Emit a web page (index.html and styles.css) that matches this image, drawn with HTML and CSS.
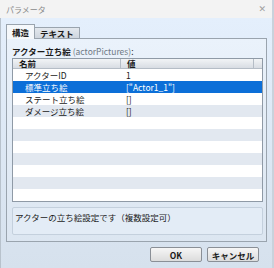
FILE: index.html
```html
<!DOCTYPE html>
<html lang="ja">
<head>
<meta charset="utf-8">
<link rel="stylesheet" href="styles.css">
</head>
<body>
<div class="window">
  <div class="titlebar">
    <span class="title">パラメータ</span>
    <span class="close">✕</span>
  </div>
  <div class="client">
    <div class="tabs">
      <div class="tab active">構造</div>
      <div class="tab">テキスト</div>
    </div>
    <div class="panel">
      <div class="label"><b>アクター立ち絵</b> <span class="param">(actorPictures)</span>:</div>
      <div class="table">
        <div class="thead">
          <div class="th name">名前</div>
          <div class="th value">値</div>
          <div class="th filler"></div>
        </div>
        <div class="tbody">
          <div class="row"><div class="cell name">アクターID</div><div class="cell value">1</div></div>
          <div class="row sel"><div class="cell name">標準立ち絵</div><div class="cell value">["Actor1_1"]</div></div>
          <div class="row"><div class="cell name">ステート立ち絵</div><div class="cell value">[]</div></div>
          <div class="row alt"><div class="cell name">ダメージ立ち絵</div><div class="cell value">[]</div></div>
          <div class="row"></div>
          <div class="row alt"></div>
          <div class="row"></div>
          <div class="row alt"></div>
          <div class="row"></div>
          <div class="row alt"></div>
          <div class="row"></div>
        </div>
      </div>
      <div class="desc">アクターの立ち絵設定です（複数設定可）</div>
    </div>
    <div class="buttons">
      <button class="btn">OK</button>
      <button class="btn">キャンセル</button>
    </div>
  </div>
</div>
</body>
</html>
```
FILE: styles.css
```css
* { box-sizing: border-box; }
html, body { margin: 0; padding: 0; }
body {
  width: 274px;
  height: 268px;
  overflow: hidden;
  font-family: "Noto Sans CJK JP", "Noto Sans", sans-serif;
  font-size: 8.5px;
  color: #1a1a1a;
  background: #f0f0f0;
}
.window {
  width: 274px;
  height: 268px;
  display: flex;
  flex-direction: column;
  border-right: 2px solid #c9d2dc;
}
.titlebar {
  height: 18px;
  flex: none;
  display: flex;
  align-items: center;
  justify-content: space-between;
  padding: 0 6px 0 6px;
  background: #f3f3f3;
}
.title {
  color: #8a8a8a;
  font-size: 8px;
}
.close {
  color: #a0a0a0;
  font-size: 9px;
  font-family: "DejaVu Sans", sans-serif;
}
.client {
  flex: 1;
  display: flex;
  flex-direction: column;
  background: linear-gradient(#e4effc, #d6e1ed);
  padding: 6px 5px 0 5px;
  border-left: 1px solid #b8c2cc;
}
.tabs {
  display: flex;
  align-items: flex-end;
  height: 14px;
}
.tab {
  height: 11px;
  padding: 0 5px;
  font-weight: bold;
  font-size: 8.5px;
  line-height: 11px;
  background: linear-gradient(#e3e8ee, #cfd6de);
  border: 1px solid #9aa4ae;
  border-bottom: none;
  margin-left: -1px;
}
.tab.active {
  height: 15px;
  line-height: 14px;
  background: #f5f8fb;
  margin-left: 0;
  position: relative;
  z-index: 1;
  margin-bottom: -1px;
}
.panel {
  height: 204px;
  flex: none;
  border: 1px solid #9aa4ae;
  background: linear-gradient(#eaf2fb, #dce6f1);
  padding: 6px 3px 6px 5px;
  display: flex;
  flex-direction: column;
}
.label {
  height: 13px;
  line-height: 12px;
  font-size: 8.5px;
  flex: none;
}
.label b { font-weight: bold; }
.param { color: #707a85; }
.table {
  height: 144px;
  flex: none;
  background: #ffffff;
  border: 1px solid #8f9aa6;
  display: flex;
  flex-direction: column;
}
.thead {
  display: flex;
  height: 10px;
  flex: none;
  background: linear-gradient(#f2f4f6, #d8dde3);
  border-bottom: 1px solid #b5bdc6;
}
.th {
  font-weight: bold;
  line-height: 9px;
  padding-left: 6px;
  border-right: 1px solid #b5bdc6;
}
.th.name { width: 108px; }
.th.value { width: 133px; }
.th.filler { flex: 1; border-right: none; }
.row {
  display: flex;
  height: 12px;
  line-height: 12px;
}
.row.alt { background: #e2e8f0; }
.row.sel { background: #0c6fd8; color: #ffffff; }
.cell.name { width: 108px; padding-left: 12px; }
.cell.value { padding-left: 5px; }
.desc {
  margin-top: 5px;
  height: 28px;
  flex: none;
  border: 1px solid #c4d0dd;
  border-radius: 2px;
  background: #e3ecf6;
  padding: 3px 2px;
  font-size: 8.5px;
  line-height: 12px;
}
.buttons {
  display: flex;
  justify-content: flex-end;
  gap: 5px;
  padding: 5px 8px 0 0;
}
.btn {
  width: 52px;
  height: 15px;
  padding: 0;
  font-family: "Noto Sans CJK JP", sans-serif;
  font-size: 8.5px;
  font-weight: bold;
  color: #1a1a1a;
  border: 1px solid #8a8f96;
  border-radius: 2px;
  background: linear-gradient(#f6f6f6, #dcdcdc);
}
```
